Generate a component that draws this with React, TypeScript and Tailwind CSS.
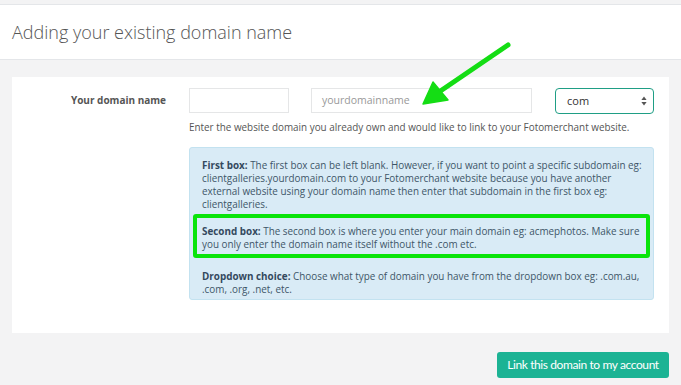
import React from "react";

export default function App() {
  return (
    <div
      className="relative w-[681px] h-[385px] overflow-hidden bg-[#f3f3f4] text-[#555]"
      style={{ fontFamily: '"Open Sans", "Liberation Sans", sans-serif' }}
    >
      <div className="h-[4px]" />
      <div className="h-[56px] bg-white border-y border-[#e4e6e9] flex items-center px-[12px]">
        <h1 className="text-[18px] font-light text-[#555] leading-none">
          Adding your existing domain name
        </h1>
      </div>
      <div className="px-[12px] pt-[17px]">
        <div className="bg-white h-[256px] flex pt-[11px]">
          <div className="w-[154px] text-right text-[10px] font-bold text-[#555] pt-[5px] leading-[14px]">
            Your domain name
          </div>
          <div className="ml-[23px] flex flex-col">
            <div className="flex items-start">
              <div className="w-[100px] h-[25px] border border-[#e5e6e7] bg-white" />
              <div className="ml-[22px] w-[221px] h-[25px] border border-[#e5e6e7] bg-white flex items-center pl-[10px] text-[10.5px] text-[#999]">
                yourdomainname
              </div>
              <div className="ml-[23px] w-[99px] h-[26px] border border-[#1f9e85] rounded-[4px] bg-white flex items-center justify-between pl-[11px] pr-[6px] text-[11px] text-[#333]">
                <span>com</span>
                <svg width="6" height="10" viewBox="0 0 6 10">
                  <path d="M3 0.5 L5.6 4 L0.4 4 Z" fill="#555" />
                  <path d="M3 9.5 L5.6 6 L0.4 6 Z" fill="#555" />
                </svg>
              </div>
            </div>
            <div className="mt-[6px] text-[9.9px] leading-[14px] text-[#555]">
              Enter the website domain you already own and would like to link to your Fotomerchant website.
            </div>
            <div className="mt-[13px] w-[465px] h-[153px] bg-[#d9ebf6] border border-[#c3e2f0] rounded-[3px] text-[9.9px] leading-[13px] text-[#3e5668] pt-[11px] pb-[11px] px-[3px]">
              <p className="pl-[9px] pr-[2px]">
                <b className="text-[#34495e]">First box:</b> The first box can be left blank. However, if you want to point a specific subdomain eg: clientgalleries.yourdomain.com to your Fotomerchant website because you have another external website using your domain name then enter that subdomain in the first box eg: clientgalleries.
              </p>
              <div className="mt-[3px] border-[4px] border-[#0ae40a] rounded-[3px] pl-[5px] pr-[6px] pt-[7px] h-[44px]">
                <b className="text-[#34495e]">Second box:</b> The second box is where you enter your main domain eg: acmephotos. Make sure you only enter the domain name itself without the .com etc.
              </div>
              <p className="mt-[12px] px-[9px]">
                <b className="text-[#34495e]">Dropdown choice:</b> Choose what type of domain you have from the dropdown box eg: .com.au, .com, .org, .net, etc.
              </p>
            </div>
          </div>
        </div>
        <div className="flex justify-end mt-[19px]">
          <button
            className="w-[172px] h-[26px] bg-[#1cb394] rounded-[3px] text-white text-[12px] flex items-center justify-center tracking-[-0.4px]"
            style={{ fontFamily: 'Lato, "Open Sans", sans-serif' }}
          >
            Link this domain to my account
          </button>
        </div>
      </div>
      <svg
        className="absolute left-0 top-0 pointer-events-none"
        width="681"
        height="385"
        viewBox="0 0 681 385"
      >
        <line x1="508" y1="45" x2="436" y2="94" stroke="#14dd14" strokeWidth="5" strokeLinecap="round" />
        <path d="M423 104 L433 82 L448 100 Z" fill="#14dd14" stroke="#14dd14" strokeWidth="1.5" strokeLinejoin="round" />
      </svg>
    </div>
  );
}
